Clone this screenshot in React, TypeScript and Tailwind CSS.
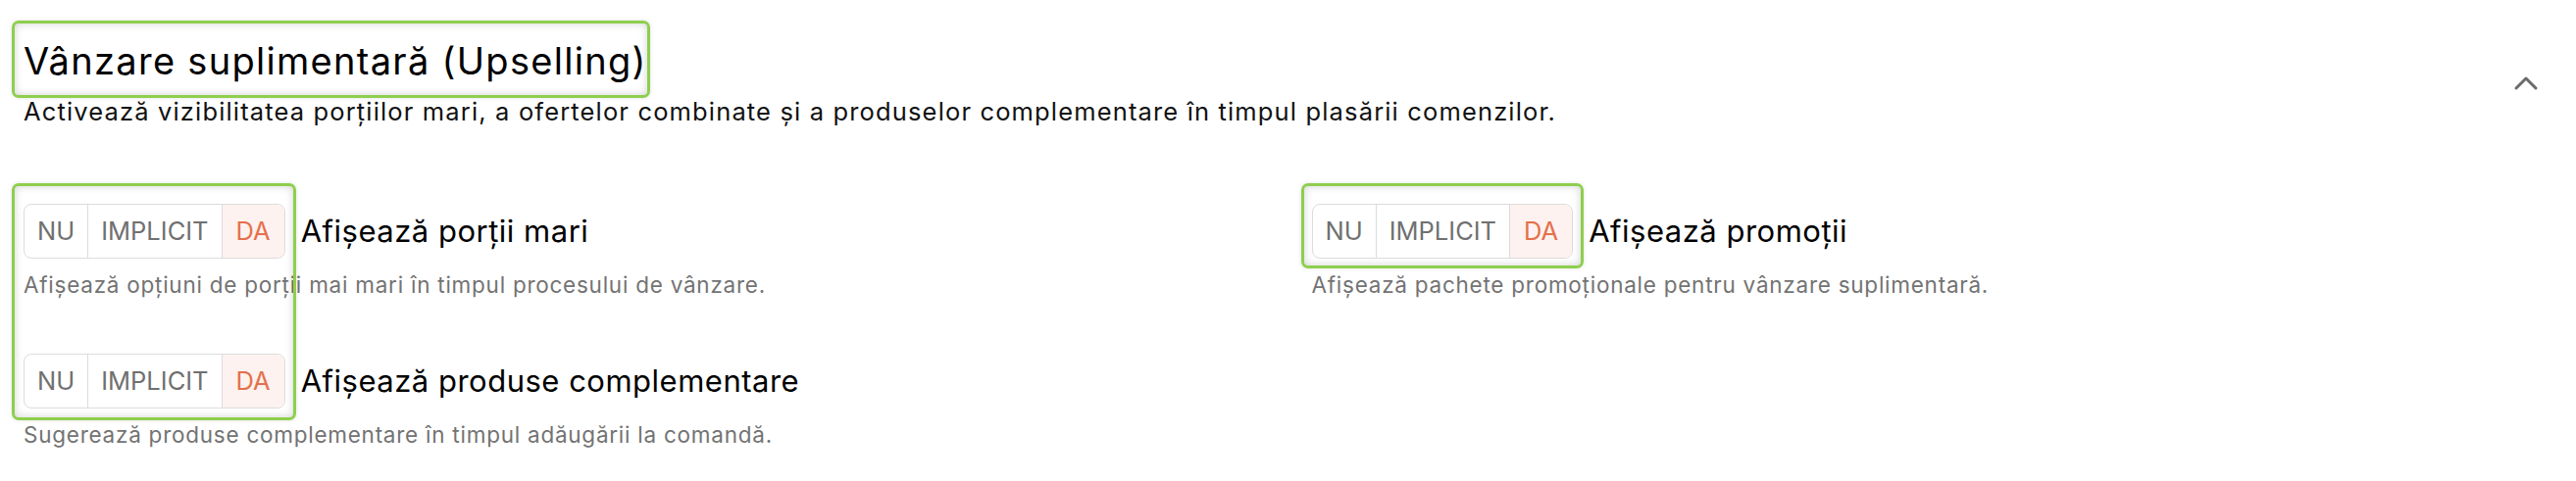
import React from "react";
import { ChevronUp } from "lucide-react";

function Toggle() {
  return (
    <div className="flex h-[56px] shrink-0 overflow-hidden rounded-[8px] border border-[#dcdcdc] bg-white text-[25.5px] leading-none">
      <div className="flex items-center px-[13px] text-[#707070]">NU</div>
      <div className="flex items-center border-l border-[#dcdcdc] px-[13px] text-[#707070]">IMPLICIT</div>
      <div className="flex items-center border-l border-[#dcdcdc] bg-[#fdf2ef] px-[14px] text-[#e5704b]">DA</div>
    </div>
  );
}

function Setting({ label, desc }: { label: string; desc: string }) {
  return (
    <div className="flex flex-col">
      <div className="flex items-center gap-[16px]">
        <Toggle />
        <span className="text-[31px] leading-[38px] tracking-[0.5px] text-black">{label}</span>
      </div>
      <p className="mt-[13px] text-[22.5px] leading-[27px] tracking-[0.75px] text-[#737373]">{desc}</p>
    </div>
  );
}

function Highlight({ className }: { className: string }) {
  return (
    <div
      className={
        "pointer-events-none absolute rounded-[7px] border-[3px] border-[#8ecf4e] shadow-[inset_0_0_8px_rgba(0,0,0,0.18),0_0_4px_rgba(0,0,0,0.12)] " +
        className
      }
    />
  );
}

export default function App() {
  return (
    <div
      className="relative h-[491px] w-[2627px] overflow-hidden bg-white"
      style={{ fontFamily: "Inter, 'Noto Sans', sans-serif" }}
    >
      <div className="px-[24px] pt-[40px]">
        <div className="flex items-center justify-between">
          <div className="flex flex-col">
            <h2 className="text-[38px] font-normal leading-[44px] tracking-[1.3px] text-black">
              Vânzare suplimentară (Upselling)
            </h2>
            <p className="mt-[15px] text-[25.5px] leading-[30px] tracking-[1.15px] text-[#111]">
              Activează vizibilitatea porțiilor mari, a ofertelor combinate și a produselor complementare în timpul
              plasării comenzilor.
            </p>
          </div>
          <div className="mr-[7px] flex h-[40px] w-[40px] items-center justify-center text-[#6b6b6b]">
            <ChevronUp size={40} strokeWidth={1.8} />
          </div>
        </div>

        <div className="mt-[79px] grid grid-cols-2 gap-x-[48px] gap-y-[57px]">
          <Setting
            label="Afișează porții mari"
            desc="Afișează opțiuni de porții mai mari în timpul procesului de vânzare."
          />
          <Setting label="Afișează promoții" desc="Afișează pachete promoționale pentru vânzare suplimentară." />
          <Setting
            label="Afișează produse complementare"
            desc="Sugerează produse complementare în timpul adăugării la comandă."
          />
        </div>
      </div>

      <Highlight className="left-[12px] top-[21px] h-[79px] w-[651px]" />
      <Highlight className="left-[12px] top-[187px] h-[242px] w-[290px]" />
      <Highlight className="left-[1327px] top-[187px] h-[87px] w-[288px]" />
    </div>
  );
}
